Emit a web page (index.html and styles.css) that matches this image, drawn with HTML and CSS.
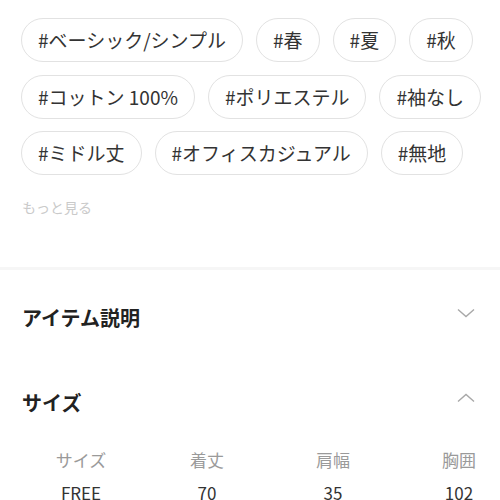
FILE: index.html
```html
<!DOCTYPE html>
<html lang="ja">
<head>
<meta charset="utf-8">
<link rel="stylesheet" href="styles.css">
</head>
<body>
<div class="page">
  <div class="tags">
    <div class="tag-row">
      <span class="tag">#ベーシック/シンプル</span>
      <span class="tag">#春</span>
      <span class="tag">#夏</span>
      <span class="tag">#秋</span>
    </div>
    <div class="tag-row">
      <span class="tag">#コットン 100%</span>
      <span class="tag">#ポリエステル</span>
      <span class="tag">#袖なし</span>
    </div>
    <div class="tag-row">
      <span class="tag">#ミドル丈</span>
      <span class="tag">#オフィスカジュアル</span>
      <span class="tag">#無地</span>
    </div>
  </div>
  <div class="more">もっと見る</div>
  <div class="divider"></div>
  <div class="acc-head first">
    <span class="acc-title">アイテム説明</span>
    <svg class="chev" width="18" height="10" viewBox="0 0 18 10"><polyline points="1,1.5 9,8.5 17,1.5" fill="none" stroke="#a8a8a8" stroke-width="1.4"/></svg>
  </div>
  <div class="acc-head second">
    <span class="acc-title">サイズ</span>
    <svg class="chev" width="18" height="10" viewBox="0 0 18 10"><polyline points="1,8.5 9,1.5 17,8.5" fill="none" stroke="#a8a8a8" stroke-width="1.4"/></svg>
  </div>
  <div class="size-table">
    <div class="cell th">サイズ</div>
    <div class="cell th">着丈</div>
    <div class="cell th">肩幅</div>
    <div class="cell th">胸囲</div>
    <div class="cell td">FREE</div>
    <div class="cell td">70</div>
    <div class="cell td">35</div>
    <div class="cell td">102</div>
  </div>
</div>
</body>
</html>
```

FILE: styles.css
```css
html, body {
  margin: 0;
  padding: 0;
  background: #fff;
}
body {
  width: 500px;
  height: 500px;
  overflow: hidden;
  font-family: "Noto Sans CJK JP", "Noto Sans", sans-serif;
  color: #222;
}
.tags {
  padding: 18px 0 0 21px;
  display: flex;
  flex-direction: column;
  gap: 12.5px;
}
.tag-row {
  display: flex;
  gap: 13px;
  white-space: nowrap;
}
.tag {
  box-sizing: border-box;
  height: 44px;
  padding: 0 16px;
  border: 1px solid #e2e2e2;
  border-radius: 22px;
  font-size: 19px;
  line-height: 42px;
  color: #333;
}
.more {
  margin: 22px 0 0 22px;
  font-size: 14px;
  line-height: 20px;
  color: #cacaca;
}
.divider {
  margin-top: 50px;
  height: 3px;
  background: #f6f6f6;
}
.acc-head {
  display: flex;
  justify-content: space-between;
  align-items: flex-start;
  padding: 0 25px 0 22px;
  height: 28px;
}
.acc-head.first { margin-top: 34px; }
.acc-head.second { margin-top: 57px; }
.acc-title {
  font-size: 20px;
  line-height: 28px;
  font-weight: 700;
  color: #222;
}
.chev {
  margin-top: 4px;
}
.size-table {
  margin-top: 31px;
  padding-left: 18px;
  display: grid;
  grid-template-columns: repeat(4, 126px);
  row-gap: 9px;
}
.cell {
  text-align: center;
  font-size: 17px;
  line-height: 24px;
}
.th { color: #9a9a9a; }
.td { color: #333; }
```
